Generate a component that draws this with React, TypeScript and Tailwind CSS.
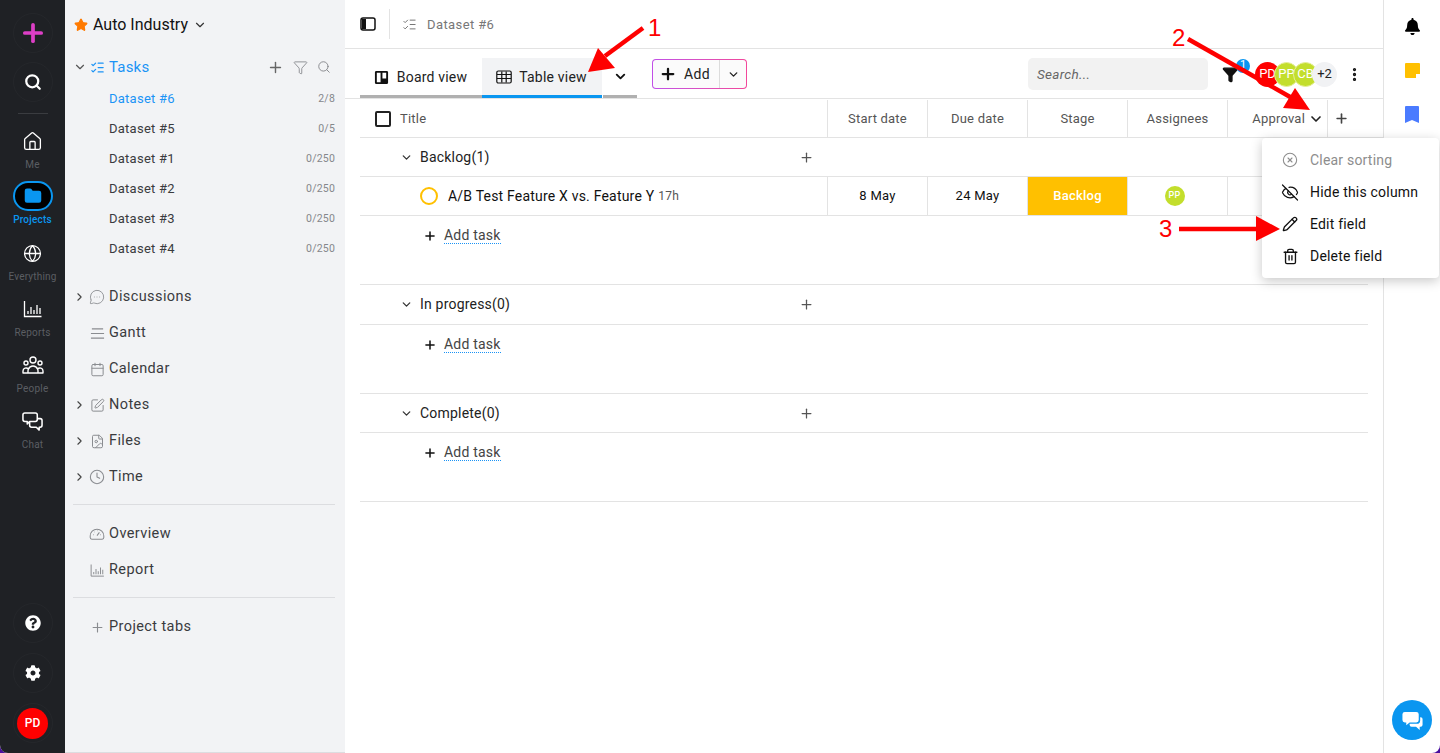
import React from 'react';
import {
  Calendar,
  ChevronDown,
  ChevronRight,
  CircleX,
  Clock,
  EllipsisVertical,
  EyeOff,
  FileImage,
  Folder,
  Funnel,
  Globe,
  House,
  ListChecks,
  MessageCircleMore,
  Pencil,
  Plus,
  Search,
  SquarePen,
  Star,
  Trash2,
} from 'lucide-react';
import { FaBell, FaCog, FaQuestionCircle } from 'react-icons/fa';
import { HiOutlineUserGroup } from 'react-icons/hi';

const datasets = [
  { name: 'Dataset #6', count: '2/8', active: true },
  { name: 'Dataset #5', count: '0/5' },
  { name: 'Dataset #1', count: '0/250' },
  { name: 'Dataset #2', count: '0/250' },
  { name: 'Dataset #3', count: '0/250' },
  { name: 'Dataset #4', count: '0/250' },
];

function BarsIcon({ className }: { className?: string }) {
  return (
    <svg viewBox="0 0 20 20" className={className} fill="none" stroke="currentColor" strokeWidth="1.3">
      <path d="M1.5 2v15.5h17" />
      <path d="M5 15v-3M8 15V8M11 15v-4M14 15V6M17 15V9" />
    </svg>
  );
}

function GaugeIcon({ className }: { className?: string }) {
  return (
    <svg viewBox="0 0 20 20" className={className} fill="none" stroke="currentColor" strokeWidth="1.3">
      <path d="M3.5 16.5h13a2 2 0 0 0 2-2v-2a8.5 8.5 0 0 0-17 0v2a2 2 0 0 0 2 2z" />
      <path d="M10 12l3-4M5 11h.8M7 7.5h.5M10.500 6h.5M15 11h-.8" />
    </svg>
  );
}

function GanttIcon({ className }: { className?: string }) {
  return (
    <svg viewBox="0 0 16 16" className={className} fill="none" stroke="currentColor" strokeWidth="1.3">
      <path d="M2 3h12M1 8h14M1 13h14" />
    </svg>
  );
}

function ChatBubbles({ className }: { className?: string }) {
  return (
    <svg viewBox="0 0 22 22" className={className} fill="none" stroke="currentColor" strokeWidth="1.6" strokeLinejoin="round">
      <path d="M3 2h11a2 2 0 0 1 2 2v5a2 2 0 0 1-2 2H8l-2.500 2.500V11H3a2 2 0 0 1-2-2V4a2 2 0 0 1 2-2z" />
      <path d="M16 8h3a2 2 0 0 1 2 2v5a2 2 0 0 1-2 2h-1v3l-3-3H10a2 2 0 0 1-2-2v-4" />
    </svg>
  );
}

function SolidChat({ className }: { className?: string }) {
  return (
    <svg viewBox="0 0 24 24" className={className} fill="currentColor">
      <path d="M4 3h12a2.500 2.500 0 0 1 2.500 2.500v6A2.500 2.500 0 0 1 16 14H9l-3.500 3v-3H4a2.500 2.500 0 0 1-2.500-2.500v-6A2.500 2.500 0 0 1 4 3z" />
      <path d="M20 8.500h.5A2 2 0 0 1 22.500 10.500v6a2 2 0 0 1-2 2h-1V22l-3.800-3.500H11a2 2 0 0 1-2-2V15.500h7.500A3.500 3.500 0 0 0 20 12z" />
    </svg>
  );
}

function GridIcon({ className }: { className?: string }) {
  return (
    <svg viewBox="0 0 16 16" className={className} fill="none" stroke="currentColor" strokeWidth="1.2">
      <rect x="0.800" y="2" width="14.400" height="12" rx="1.500" />
      <path d="M1 5.500h14M1 9.500h14M5.800 2.500v11M10.200 2.500v11" />
    </svg>
  );
}

function RailItem({ icon, label }: { icon: React.ReactNode; label: string }) {
  return (
    <div className="flex h-14 flex-col items-center justify-center">
      <div className="flex h-[30px] items-center justify-center">{icon}</div>
      <span className="mt-[2px] text-[10px] leading-[14px] tracking-[0.2px] text-[#5b5e63]">{label}</span>
    </div>
  );
}

function IconRound({ children }: { children: React.ReactNode }) {
  return <div className="flex h-10 w-10 items-center justify-center rounded-full border border-[#25272b]">{children}</div>;
}

function SectionRow({ caret, icon, label }: { caret?: boolean; icon: React.ReactNode; label: string }) {
  return (
    <div className="flex h-9 items-center text-[14.5px] tracking-[0.4px] text-[#3a3b3e]">
      <div className="flex w-[13px] justify-center">{caret && <ChevronRight className="h-[14px] w-[14px] text-[#444]" strokeWidth={2} />}</div>
      <div className="flex w-[22px] justify-center text-[#8a8c90]">{icon}</div>
      <span className="ml-[1px]">{label}</span>
    </div>
  );
}

function Sidebar() {
  return (
    <aside className="flex w-[280px] shrink-0 flex-col border-b border-[#dcdde0] bg-[#f2f3f5] pl-[8px] pr-[10px]">
      <div className="flex h-[50px] items-center pl-[1px] text-[16px] text-[#111]">
        <Star className="h-[14px] w-[14px] fill-[#ff7a00] text-[#ff7a00]" />
        <span className="ml-[5px]">Auto Industry</span>
        <ChevronDown className="ml-[5px] h-[14px] w-[14px] text-[#333]" strokeWidth={2} />
      </div>
      <div className="flex h-[34px] items-center text-[#1b93f5]">
        <div className="flex w-[14px] justify-center">
          <ChevronDown className="h-[14px] w-[14px] text-[#555]" strokeWidth={2} />
        </div>
        <ListChecks className="ml-[3px] h-[15px] w-[15px]" strokeWidth={2} />
        <span className="ml-[4px] text-[15px] tracking-[0.2px]">Tasks</span>
        <div className="ml-auto flex items-center gap-[9px] pr-[4px] text-[#85878b]">
          <Plus className="h-[17px] w-[17px] text-[#666]" strokeWidth={2} />
          <Funnel className="h-[15px] w-[15px]" strokeWidth={1.4} />
          <Search className="h-[14px] w-[14px]" strokeWidth={1.6} />
        </div>
      </div>
      <div>
        {datasets.map((d) => (
          <div key={d.name} className="flex h-[30px] items-center pl-[36px] pr-0">
            <span className={`text-[13px] tracking-[0.25px] ${d.active ? 'text-[#1b93f5]' : 'text-[#3a3b3e]'}`}>{d.name}</span>
            <span className="ml-auto text-[10.5px] tracking-[0.2px] text-[#85878b]">{d.count}</span>
          </div>
        ))}
      </div>
      <div className="mt-[15px]">
        <SectionRow caret icon={<MessageCircleMore className="h-[16px] w-[16px]" strokeWidth={1.3} />} label="Discussions" />
        <SectionRow icon={<GanttIcon className="h-[15px] w-[15px]" />} label="Gantt" />
        <SectionRow icon={<Calendar className="h-[15px] w-[15px]" strokeWidth={1.6} />} label="Calendar" />
        <SectionRow caret icon={<SquarePen className="h-[15px] w-[15px]" strokeWidth={1.6} />} label="Notes" />
        <SectionRow caret icon={<FileImage className="h-[15px] w-[15px]" strokeWidth={1.6} />} label="Files" />
        <SectionRow caret icon={<Clock className="h-[16px] w-[16px]" strokeWidth={1.6} />} label="Time" />
      </div>
      <div className="mt-[9px] border-t border-[#dcdde0] pb-[9px] pt-[11px]">
        <SectionRow icon={<GaugeIcon className="h-[16px] w-[16px]" />} label="Overview" />
        <SectionRow icon={<BarsIcon className="h-[15px] w-[15px]" />} label="Report" />
      </div>
      <div className="border-t border-[#dcdde0] pt-[11px]">
        <SectionRow icon={<Plus className="h-[15px] w-[15px]" strokeWidth={1.8} />} label="Project tabs" />
      </div>
    </aside>
  );
}

function Rail() {
  return (
    <nav className="flex w-[65px] shrink-0 flex-col items-center bg-[#1f2125] text-white">
      <div className="mt-[13px]">
        <IconRound>
          <Plus className="h-7 w-7 text-[#dd3fc6]" strokeWidth={3.2} />
        </IconRound>
      </div>
      <div className="mt-[9px]">
        <IconRound>
          <Search className="h-[18px] w-[18px]" strokeWidth={3} />
        </IconRound>
      </div>
      <div className="mt-[11px] h-px w-[30px] bg-[#3a3c40]" />
      <div className="mt-[7px] w-full">
        <RailItem icon={<House className="h-[21px] w-[21px]" strokeWidth={1.5} />} label="Me" />
        <div className="flex h-14 flex-col items-center pt-[4px]">
          <div className="flex h-[30px] w-10 items-center justify-center rounded-full border-2 border-[#0a96f0] bg-black">
            <Folder className="h-[18px] w-[18px] fill-[#0a96f0] text-[#0a96f0]" />
          </div>
          <span className="mt-[2px] text-[10px] font-medium leading-[14px] tracking-[0.2px] text-[#0a96f0]">Projects</span>
        </div>
        <RailItem icon={<Globe className="h-[19px] w-[19px]" strokeWidth={1.6} />} label="Everything" />
        <RailItem icon={<BarsIcon className="h-[20px] w-[20px]" />} label="Reports" />
        <RailItem icon={<HiOutlineUserGroup className="h-[24px] w-[24px]" style={{ strokeWidth: 1.4 }} />} label="People" />
        <RailItem icon={<ChatBubbles className="h-[21px] w-[21px]" />} label="Chat" />
      </div>
      <div className="mt-auto mb-[10px] flex flex-col items-center gap-[10px]">
        <IconRound>
          <FaQuestionCircle className="h-[16px] w-[16px]" />
        </IconRound>
        <IconRound>
          <FaCog className="h-[16px] w-[16px]" />
        </IconRound>
        <IconRound>
          <div className="flex h-[31px] w-[31px] items-center justify-center rounded-full bg-[#fe0000] text-[12px] font-medium">PD</div>
        </IconRound>
      </div>
    </nav>
  );
}

function Toolbar() {
  return (
    <div className="flex h-[50px] items-end border-b border-[#e3e3e3] pl-[15px]">
      <div className="flex h-[49px] w-[122px] items-center justify-center gap-[8px] border-b-[3px] border-[#b0b0b0] pr-[1px] pt-[11px] text-[14px] tracking-[0.2px] text-[#222]">
        <svg viewBox="0 0 16 16" className="h-[15px] w-[15px]" fill="#111">
          <path d="M2.500 1h11A1.500 1.500 0 0 1 15 2.500v11a1.500 1.500 0 0 1-1.500 1.500h-11A1.500 1.500 0 0 1 1 13.500v-11A1.500 1.500 0 0 1 2.500 1zM3 3v10h4V3zm6 0v6h4V3z" fillRule="evenodd" />
        </svg>
        Board view
      </div>
      <div className="flex h-[40px] w-[120px] items-center justify-center gap-[7px] border-b-[3px] border-[#0a96f0] bg-[#f2f3f5] pr-[1px] pt-[1px] text-[14px] tracking-[0.2px] text-[#222]">
        <GridIcon className="h-[16px] w-[16px] text-[#111]" />
        Table view
      </div>
      <div className="ml-px flex h-[40px] w-[34px] items-center justify-center border-b-[3px] border-[#b0b0b0]">
        <ChevronDown className="h-[15px] w-[15px] text-[#111]" strokeWidth={3} />
      </div>
      <div className="mb-[9px] ml-[15px] rounded-[4px] bg-gradient-to-r from-[#c14fe8] to-[#f2479a] p-px">
        <div className="flex h-[28px] w-[93px] items-center rounded-[3px] bg-[#fbfbfb] text-[14px] tracking-[0.3px] text-[#222]">
          <div className="flex w-[66px] items-center gap-[7px] pl-[6px]">
            <Plus className="h-[18px] w-[18px] text-[#111]" strokeWidth={3} />
            Add
          </div>
          <div className="flex h-full flex-1 items-center justify-center border-l border-[#dcdcdc]">
            <ChevronDown className="h-[13px] w-[13px]" strokeWidth={2.5} />
          </div>
        </div>
      </div>
      <div className="mb-[8px] ml-auto flex items-center pr-[20px]">
        <div className="flex h-[32px] w-[180px] items-center rounded-[5px] bg-[#f2f2f2] pl-[9px] text-[13.5px] italic tracking-[0.3px] text-[#666]">Search...</div>
        <div className="relative ml-[14px] w-[17px]">
          <Funnel className="h-[17px] w-[17px] fill-[#111] text-[#111]" />
          <span className="absolute left-[14px] top-[-7px] flex h-[14px] w-[14px] items-center justify-center rounded-full bg-[#0a96f0] text-[11px] text-white">1</span>
        </div>
        <div className="ml-[16px] flex items-center text-[13px] text-white">
          <span className="flex h-[25px] w-[25px] items-center justify-center overflow-hidden rounded-full bg-[#fe0000]">PD</span>
          <span className="ml-[-6px] flex h-[25px] w-[25px] items-center justify-center overflow-hidden rounded-full border border-[#e6ef9c] bg-[#c3de2c]">PP</span>
          <span className="ml-[-6px] flex h-[25px] w-[25px] items-center justify-center overflow-hidden rounded-full border border-[#e6ef9c] bg-[#c3de2c]">CB</span>
          <span className="ml-[-6px] flex h-[25px] w-[25px] items-center justify-center rounded-full bg-[#f1f2f4] text-[#222]">+2</span>
        </div>
        <EllipsisVertical className="ml-[9px] h-[17px] w-[17px] text-[#111]" strokeWidth={2.6} />
      </div>
    </div>
  );
}

function Cell({ children, className = '' }: { children?: React.ReactNode; className?: string }) {
  return <div className={`flex w-[100px] shrink-0 items-center justify-center border-l border-[#e3e3e3] ${className}`}>{children}</div>;
}

function GroupRow({ label, height }: { label: string; height: string }) {
  return (
    <div className={`flex ${height} items-center border-b border-[#e3e3e3] pl-[40px] text-[14px] tracking-[0.2px] text-[#222]`}>
      <ChevronDown className="mr-[7px] h-[13px] w-[13px] text-[#333]" strokeWidth={2.4} />
      {label}
      <Plus className="ml-auto mr-[554px] h-[15px] w-[15px] text-[#555]" strokeWidth={2} />
    </div>
  );
}

function AddTask() {
  return (
    <div className="h-[69px] border-b border-[#e3e3e3] pl-[63px] pt-[10px]">
      <div className="flex h-[20px] items-center text-[14px] tracking-[0.2px] text-[#444]">
        <Plus className="mr-[7px] h-[14px] w-[14px] text-[#111]" strokeWidth={2.6} />
        <span className="border-b border-dotted border-[#1b93f5] leading-[15px]">Add task</span>
      </div>
    </div>
  );
}

function TaskTable() {
  return (
    <div className="ml-[15px]">
      <div className="flex h-[39px] border-b border-[#e3e3e3] pt-px text-[13px] tracking-[0.2px] text-[#555]">
        <div className="flex w-[467px] shrink-0 items-center gap-[9px] pl-[15px]">
          <span className="h-[16px] w-[16px] rounded-[2px] border-2 border-[#222]" />
          Title
        </div>
        <Cell>Start date</Cell>
        <Cell>Due date</Cell>
        <Cell>Stage</Cell>
        <Cell>Assignees</Cell>
        <Cell className="justify-end gap-[3px] pr-[3px]">
          Approval
          <ChevronDown className="h-[16px] w-[16px] text-[#222]" strokeWidth={2.5} />
        </Cell>
        <div className="flex items-center border-l border-[#e3e3e3] pl-[6px]">
          <Plus className="h-[15px] w-[15px] text-[#444]" strokeWidth={2.6} />
        </div>
      </div>
      <div className="w-[1008px]">
        <GroupRow label="Backlog(1)" height="h-[39px]" />
        <div className="flex h-[39px] border-b border-[#e3e3e3] text-[13px] tracking-[0.25px] text-[#111]">
          <div className="flex w-[467px] shrink-0 items-center pl-[60px]">
            <span className="h-[18px] w-[18px] rounded-full border-2 border-[#ffc000]" />
            <span className="ml-[10px] text-[14px] tracking-[0.2px]">A/B Test Feature X vs. Feature Y</span>
            <span className="ml-[4px] text-[12px] text-[#555]">17h</span>
          </div>
          <Cell>8 May</Cell>
          <Cell>24 May</Cell>
          <Cell className="bg-[#ffc000] font-medium text-white">Backlog</Cell>
          <Cell className="pr-[6px]">
            <span className="flex h-[20px] w-[20px] items-center justify-center rounded-full bg-[#c3de2c] text-[9px] font-medium text-white">PP</span>
          </Cell>
          <Cell />
        </div>
        <AddTask />
        <GroupRow label="In progress(0)" height="h-[40px]" />
        <AddTask />
        <GroupRow label="Complete(0)" height="h-[39px]" />
        <AddTask />
      </div>
    </div>
  );
}

function ColumnMenu() {
  const items = [
    { label: 'Clear sorting', icon: <CircleX className="h-[16px] w-[16px]" strokeWidth={1.6} />, muted: true },
    { label: 'Hide this column', icon: <EyeOff className="h-[19px] w-[19px]" strokeWidth={1.6} /> },
    { label: 'Edit field', icon: <Pencil className="h-[16px] w-[16px]" strokeWidth={2} /> },
    { label: 'Delete field', icon: <Trash2 className="h-[17px] w-[17px]" strokeWidth={1.9} /> },
  ];
  return (
    <div className="absolute left-[1262px] top-[138px] w-[177px] rounded-[4px] bg-white py-[6px] shadow-[0_3px_12px_rgba(0,0,0,0.22)]">
      {items.map((item) => (
        <div key={item.label} className={`flex h-[32px] items-center pl-[19px] text-[14px] tracking-[0.2px] ${item.muted ? 'text-[#8d8d8d]' : 'text-[#111]'}`}>
          <span className="flex w-[18px] justify-center">{item.icon}</span>
          <span className="ml-[11px]">{item.label}</span>
        </div>
      ))}
    </div>
  );
}

function Annotations() {
  return (
    <>
      <svg className="pointer-events-none absolute left-0 top-0 h-[753px] w-[1440px]" viewBox="0 0 1440 753" fill="#fe0000" stroke="none">
        <path d="M643 28 L605 56" stroke="#fe0000" strokeWidth="4.500" />
        <polygon points="588,72 598,48 615,68" />
        <path d="M1188 39 L1292 98" stroke="#fe0000" strokeWidth="4.500" />
        <polygon points="1310,110 1295,88 1283,108" />
        <path d="M1179 229 L1258 229" stroke="#fe0000" strokeWidth="4.500" />
        <polygon points="1280,229 1256,216 1256,241" />
      </svg>
      <span className="absolute left-[648px] top-[14px] font-['Liberation_Sans',sans-serif] text-[24px] leading-[28px] text-[#fe0000]">1</span>
      <span className="absolute left-[1172px] top-[24px] font-['Liberation_Sans',sans-serif] text-[24px] leading-[28px] text-[#fe0000]">2</span>
      <span className="absolute left-[1159px] top-[215px] font-['Liberation_Sans',sans-serif] text-[24px] leading-[28px] text-[#fe0000]">3</span>
    </>
  );
}

export default function App() {
  return (
    <div className="relative h-[753px] w-[1440px] overflow-hidden bg-[#4a0f9e] font-['Roboto',sans-serif]">
      <div className="flex h-full w-full overflow-hidden rounded-b-[8px] bg-white">
        <Rail />
        <Sidebar />
        <main className="flex min-w-0 flex-1 flex-col">
          <div className="flex h-[49px] shrink-0 items-center border-b border-[#e3e3e3] pl-[15px]">
            <svg viewBox="0 0 16 16" className="h-[16px] w-[16px]" fill="none" stroke="#111" strokeWidth="1.5">
              <rect x="1" y="2" width="14" height="12" rx="2" />
              <path d="M2 3h4v10H2z" fill="#111" stroke="none" />
            </svg>
            <div className="ml-[13px] h-[30px] w-px bg-[#e3e3e3]" />
            <ListChecks className="ml-[12px] h-[15px] w-[15px] text-[#777]" strokeWidth={1.6} />
            <span className="ml-[10px] pt-px text-[13px] tracking-[0.4px] text-[#777]">Dataset #6</span>
          </div>
          <Toolbar />
          <TaskTable />
        </main>
        <div className="flex w-[57px] shrink-0 flex-col items-center border-l border-[#e3e3e3] pt-[18px]">
          <FaBell className="h-[17px] w-[17px] text-black" />
          <div className="relative mt-[28px] h-[15px] w-[15px] rounded-[1px] bg-[#ffc000]">
            <span className="absolute bottom-0 right-0 h-[4px] w-[4px] bg-white" />
          </div>
          <svg viewBox="0 0 14 17" className="mt-[28px] h-[17px] w-[14px]" fill="#4a7bff">
            <path d="M1 0h12a1 1 0 0 1 1 1v16l-7-3-7 3V1a1 1 0 0 1 1-1z" />
          </svg>
          <div className="mb-[13px] mt-auto flex h-10 w-10 items-center justify-center rounded-full bg-[#0a96f0]">
            <SolidChat className="h-[23px] w-[23px] text-white" />
          </div>
        </div>
      </div>
      <ColumnMenu />
      <Annotations />
    </div>
  );
}
